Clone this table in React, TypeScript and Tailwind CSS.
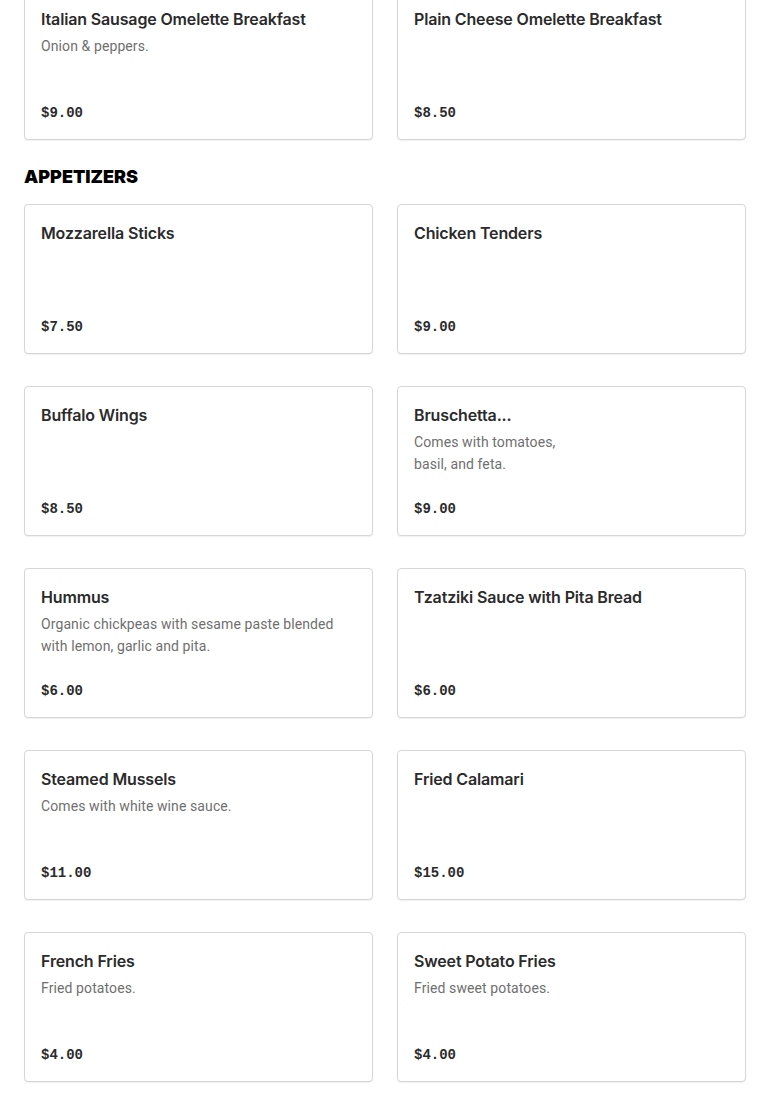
import React from 'react';

type Item = { name: string; desc?: string; price: string };

const breakfast: Item[] = [
  { name: 'Italian Sausage Omelette Breakfast', desc: 'Onion & peppers.', price: '$9.00' },
  { name: 'Plain Cheese Omelette Breakfast', price: '$8.50' },
];

const appetizers: Item[] = [
  { name: 'Mozzarella Sticks', price: '$7.50' },
  { name: 'Chicken Tenders', price: '$9.00' },
  { name: 'Buffalo Wings', price: '$8.50' },
  { name: 'Bruschetta...', desc: 'Comes with tomatoes,\nbasil, and feta.', price: '$9.00' },
  { name: 'Hummus', desc: 'Organic chickpeas with sesame paste blended with lemon, garlic and pita.', price: '$6.00' },
  { name: 'Tzatziki Sauce with Pita Bread', price: '$6.00' },
  { name: 'Steamed Mussels', desc: 'Comes with white wine sauce.', price: '$11.00' },
  { name: 'Fried Calamari', price: '$15.00' },
  { name: 'French Fries', desc: 'Fried potatoes.', price: '$4.00' },
  { name: 'Sweet Potato Fries', desc: 'Fried sweet potatoes.', price: '$4.00' },
];

const MenuCard: React.FC<{ item: Item }> = ({ item }) => (
  <div className="h-[150px] flex flex-col justify-between border border-[#d6d6d6] rounded-[4px] bg-white px-4 py-4 shadow-[0_1px_1px_rgba(0,0,0,0.06)]">
    <div>
      <h3 className="text-[16px] leading-6 font-semibold text-[#2b2b2b] tracking-[-0.15px]">{item.name}</h3>
      {item.desc && (
        <p className="mt-1 text-[14px] leading-[22px] text-[#6f6f6f] whitespace-pre-line font-['Roboto',sans-serif] tracking-[0.1px]">
          {item.desc}
        </p>
      )}
    </div>
    <div className="text-[14px] leading-5 font-bold text-[#2b2b2b] font-['Liberation_Mono',monospace]">{item.price}</div>
  </div>
);

export default function App() {
  return (
    <div className="h-[1106px] overflow-hidden bg-white font-['Inter',sans-serif]">
      <div className="px-6 -mt-[10px]">
        <div className="grid grid-cols-2 gap-x-6 gap-y-8">
          {breakfast.map((item) => (
            <MenuCard key={item.name} item={item} />
          ))}
        </div>

        <h2 className="mt-[25px] mb-[15px] text-[18px] leading-6 font-black text-black">
          APPETIZERS
        </h2>

        <div className="grid grid-cols-2 gap-x-6 gap-y-8">
          {appetizers.map((item) => (
            <MenuCard key={item.name} item={item} />
          ))}
        </div>
      </div>
    </div>
  );
}
